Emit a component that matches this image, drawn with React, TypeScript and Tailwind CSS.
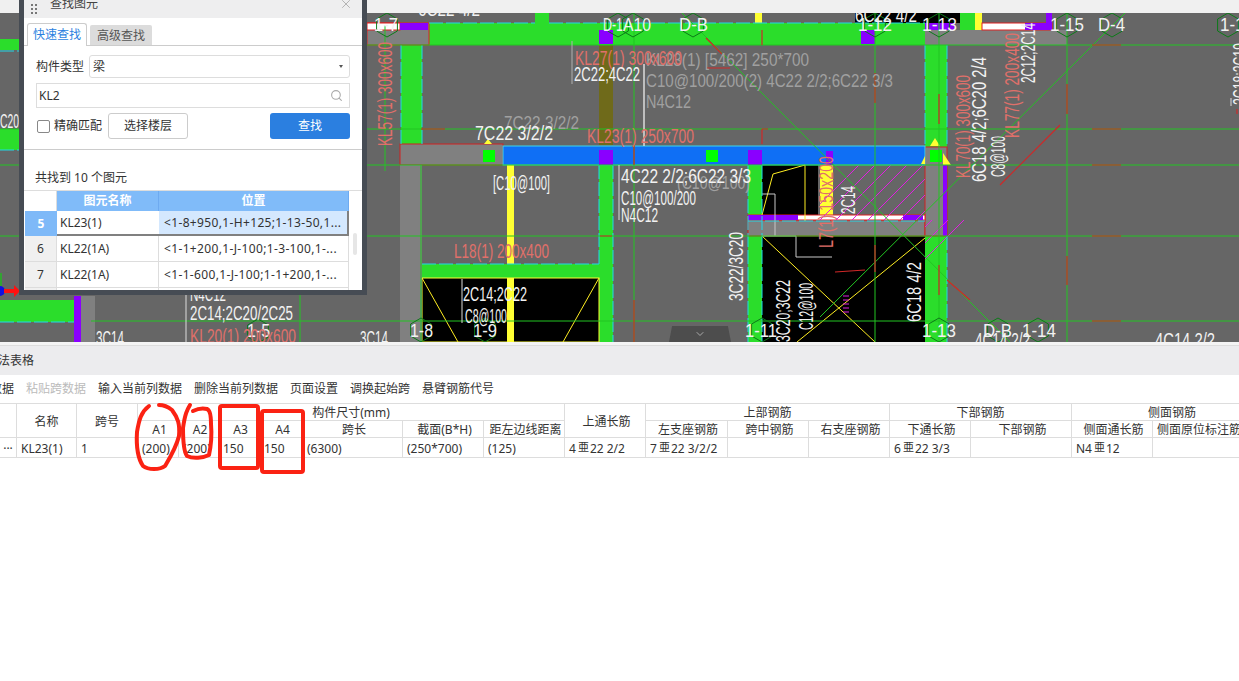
import { ChevronDown, Search, X } from "lucide-react";

const FONT = "font-['Noto_Sans','Noto_Sans_CJK_SC',sans-serif]";

type Label = { t: string; x: number; y: number; w: number; s?: number; c?: string; rot?: boolean };

// x, baseline, text length (px), size, colour. rot = read bottom to top
const WHITE = "#f2f2f2";
const GREY = "#a0a0a0";
const SALMON = "#e0706a";

const labels: Label[] = [
  { t: "1-7", x: 374, y: 31, w: 24, s: 19 },
  { t: "D-1", x: 603, y: 31, w: 20, s: 19 },
  { t: "A10", x: 623, y: 31, w: 28, s: 19 },
  { t: "D-B", x: 679, y: 31, w: 29, s: 19 },
  { t: "1-12", x: 858, y: 31, w: 34, s: 19 },
  { t: "1-13", x: 922, y: 31, w: 35, s: 19 },
  { t: "1-15", x: 1050, y: 31, w: 34, s: 19 },
  { t: "D-4", x: 1098, y: 31, w: 27, s: 19 },
  { t: "1-16", x: 1220, y: 31, w: 34, s: 19 },
  { t: "1-8", x: 410, y: 337, w: 23, s: 19 },
  { t: "1-9", x: 473, y: 337, w: 24, s: 19 },
  { t: "1-11", x: 745, y: 337, w: 32, s: 19 },
  { t: "1-13", x: 922, y: 337, w: 34, s: 19 },
  { t: "D-B", x: 983, y: 337, w: 29, s: 19 },
  { t: "1-14", x: 1022, y: 337, w: 34, s: 19 },
  { t: "1-5", x: 247, y: 337, w: 23, s: 19 },

  { t: "KL23(1) [5462] 250*700", x: 646, y: 66, w: 163, s: 18, c: GREY },
  { t: "C10@100/200(2) 4C22 2/2;6C22 3/3", x: 646, y: 87, w: 247, s: 18, c: GREY },
  { t: "N4C12", x: 646, y: 108, w: 45, s: 18, c: GREY },
  { t: "7C22 3/2/2", x: 504, y: 129, w: 75, s: 18, c: GREY },
  { t: "(C10@100)", x: 677, y: 189, w: 73, s: 18, c: GREY },

  { t: "KL27(1) 300x600", x: 575, y: 65, w: 107, s: 20, c: SALMON },
  { t: "KL23(1) 250x700", x: 587, y: 143, w: 107, s: 20, c: SALMON },
  { t: "L18(1) 200x400", x: 454, y: 258, w: 95, s: 20, c: SALMON },
  { t: "KL20(1) 200x600", x: 190, y: 343, w: 106, s: 20, c: SALMON },

  { t: "2C22;4C22", x: 574, y: 81, w: 66, s: 20 },
  { t: "7C22  3/2/2", x: 475, y: 140, w: 78, s: 20 },
  { t: "[C10@100]", x: 493, y: 190, w: 57, s: 20 },
  { t: "4C22 2/2;6C22 3/3", x: 621, y: 183, w: 130, s: 20 },
  { t: "C10@100/200", x: 621, y: 205, w: 75, s: 20 },
  { t: "N4C12", x: 621, y: 222, w: 37, s: 20 },
  { t: "2C14;2C22", x: 463, y: 301, w: 64, s: 20 },
  { t: "C8@100", x: 465, y: 323, w: 42, s: 20 },
  { t: "N4C12", x: 190, y: 301, w: 36, s: 20 },
  { t: "2C14;2C20/2C25", x: 190, y: 320, w: 103, s: 20 },
  { t: "3C14", x: 96, y: 345, w: 28, s: 20 },
  { t: "3C14", x: 360, y: 345, w: 28, s: 20 },
  { t: "4C14 2/2", x: 975, y: 347, w: 55, s: 20 },
  { t: "4C14 2/2", x: 1155, y: 347, w: 60, s: 20 },
  { t: "6C22  4/2", x: 418, y: 16, w: 62, s: 20 },
  { t: "6C22  4/2", x: 855, y: 22, w: 62, s: 20 },

  { t: "3C22/3C20", x: 743, y: 301, w: 69, s: 20, rot: true },
  { t: "3C20;3C22", x: 790, y: 342, w: 62, s: 20, rot: true },
  { t: "C12@100", x: 813, y: 330, w: 47, s: 20, rot: true },
  { t: "6C18 4/2;6C20 2/4", x: 986, y: 182, w: 125, s: 20, rot: true },
  { t: "C8@100", x: 1005, y: 177, w: 41, s: 20, rot: true },
  { t: "2C12;2C14", x: 1035, y: 83, w: 60, s: 20, rot: true },
  { t: "6C18  4/2", x: 921, y: 322, w: 60, s: 20, rot: true },
  { t: "2C14", x: 855, y: 214, w: 28, s: 20, rot: true },
  { t: "2C18;2C19", x: 1247, y: 105, w: 62, s: 20, rot: true },
  { t: "KL70(1) 300x600", x: 970, y: 178, w: 103, s: 20, c: SALMON, rot: true },
  { t: "KL77(1) 200x400", x: 1019, y: 138, w: 105, s: 20, c: SALMON, rot: true },
  { t: "KL57(1) 300x600", x: 392, y: 146, w: 104, s: 20, c: SALMON, rot: true },
  { t: "L7(1) 150x200", x: 833, y: 248, w: 92, s: 20, c: SALMON, rot: true },
];

const hexes = [
  [387, 25], [618, 25], [633, 25], [693, 25], [875, 25], [939, 25], [1067, 25], [1112, 25], [1228, 25],
  [421, 330], [485, 330], [762, 330], [939, 330], [998, 330], [1038, 330], [258, 331],
];

const hexPoints = (cx: number, cy: number, r = 12) =>
  [0, 60, 120, 180, 240, 300]
    .map((a) => `${cx + r * Math.sin((a * Math.PI) / 180)},${cy - r * Math.cos((a * Math.PI) / 180)}`)
    .join(" ");

const hatch = [0, 1, 2, 3, 4, 5, 6, 7, 8, 9, 10].map((i) => {
  const x0 = 804 + i * 16;
  const x1 = Math.max(x0, 820);
  const x2 = Math.min(x0 + 55, 925);
  return { x1, y1: 220 - (x1 - x0), x2, y2: 220 - (x2 - x0) };
});

const CadDrawing = () => (
  <svg viewBox="0 13 1239 329" className="block h-full w-full" fontFamily="'Liberation Sans',sans-serif">
    <rect x="0" y="13" width="1239" height="329" fill="#666666" />

    {/* beams + columns */}
    <rect x="0" y="39" width="19" height="11" fill="#2bdd2b" />
    <rect x="0" y="129" width="19" height="21" fill="#2bdd2b" />
    <rect x="0" y="300" width="74" height="22" fill="#2bdd2b" />
    <rect x="74" y="296" width="7" height="46" fill="#8a00ff" />
    <rect x="81" y="296" width="14" height="46" fill="#808080" />
    <rect x="429" y="23" width="496" height="22" fill="#2bdd2b" />
    <rect x="535" y="13" width="14" height="10" fill="#2bdd2b" />
    <rect x="755" y="13" width="7" height="10" fill="#ffff33" />
    <rect x="401" y="45" width="21" height="100" fill="#2bdd2b" />
    <rect x="367" y="23" width="62" height="22" fill="#808080" stroke="#e02020" />
    <rect x="367" y="23" width="33" height="7" fill="#ffffff" stroke="#e02020" />
    <rect x="400" y="23" width="28" height="7" fill="#8a00ff" />
    <rect x="599" y="45" width="14" height="100" fill="#6f6a1a" />
    <rect x="422" y="264" width="177" height="14" fill="#2bdd2b" />
    <rect x="599" y="165" width="14" height="177" fill="#2bdd2b" />
    <rect x="748" y="165" width="14" height="177" fill="#2bdd2b" />
    <rect x="925" y="45" width="22" height="102" fill="#2bdd2b" />
    <rect x="925" y="236" width="22" height="106" fill="#2bdd2b" />

    {/* black pits */}
    <rect x="422" y="278" width="177" height="64" fill="#000" stroke="#ffff33" />
    <rect x="762" y="165" width="56" height="50" fill="#000" />
    <rect x="762" y="236" width="163" height="106" fill="#000" />
    <rect x="925" y="13" width="35" height="10" fill="#000" />
    <rect x="855" y="13" width="70" height="10" fill="#000" />

    {/* grey slabs */}
    <rect x="400" y="144" width="103" height="21" fill="#808080" stroke="#d02020" />
    <rect x="400" y="165" width="22" height="177" fill="#808080" />
    <rect x="748" y="220" width="177" height="16" fill="#808080" stroke="#d02020" />
    <rect x="925" y="147" width="22" height="89" fill="#808080" stroke="#d02020" />
    <rect x="943" y="165" width="4" height="71" fill="#8a00ff" />
    <rect x="925" y="30" width="142" height="15" fill="#808080" />
    <rect x="960" y="13" width="15" height="17" fill="#2bdd2b" />
    <rect x="975" y="13" width="7" height="17" fill="#ffff33" />
    <rect x="982" y="23" width="70" height="7" fill="#ffffff" stroke="#e02020" />
    <rect x="1025" y="23" width="27" height="7" fill="#8a00ff" />
    <rect x="1046" y="13" width="6" height="12" fill="#8a00ff" />
    <rect x="925" y="23" width="30" height="7" fill="#8a00ff" />

    {/* hatched bay */}
    <rect x="820" y="165" width="13" height="50" fill="#ffff33" />
    <rect x="748" y="215" width="177" height="5" fill="#ffffff" stroke="#e02020" />
    <rect x="748" y="215" width="50" height="5" fill="#8a00ff" />
    <rect x="903" y="215" width="20" height="5" fill="#8a00ff" />
    <g stroke="#e020e0" strokeWidth="1">
      {hatch.map((h) => (
        <line key={h.x1 + h.y1} {...h} />
      ))}
    </g>

    {/* selected blue beam */}
    <rect x="503" y="146" width="422" height="19" fill="#0f6ff5" stroke="#3fd8e8" />
    <rect x="599" y="150" width="14" height="15" fill="#8a00ff" />
    <rect x="748" y="150" width="14" height="15" fill="#8a00ff" />
    <rect x="826" y="151" width="7" height="14" fill="#8a00ff" />
    <rect x="599" y="30" width="14" height="14" fill="#8a00ff" />
    <rect x="861" y="30" width="14" height="14" fill="#8a00ff" />
    <rect x="483" y="150" width="12" height="12" fill="#00ff00" />
    <rect x="706" y="150" width="12" height="12" fill="#00ff00" />
    <rect x="930" y="150" width="12" height="12" fill="#00ff00" />

    {/* yellow rebar + diagonals */}
    <rect x="507" y="165" width="7" height="99" fill="#ffff33" />
    <rect x="507" y="278" width="7" height="64" fill="#ffff33" />
    <polygon points="488,139 484,144 492,144" fill="#ffff33" />
    <polygon points="935,138 930,146 940,146" fill="#ffff33" />
    <polygon points="921,164 925,156 925,164" fill="#ffff33" />
    <polygon points="943,153 951,165 943,165" fill="#ffff33" />
    <g stroke="#ffee22" strokeWidth="1" fill="none">
      <line x1="422" y1="278" x2="458" y2="342" />
      <line x1="599" y1="278" x2="563" y2="342" />
      <polyline points="762,215 773,174 805,165 805,221" />
      <line x1="762" y1="236" x2="875" y2="342" />
      <line x1="925" y1="238" x2="797" y2="342" />
    </g>
    <path d="M762 236H796V257H832" stroke="#c8c8c8" fill="none" />
    <path d="M762 194H775V236" stroke="#c8c8c8" fill="none" />
    <path d="M843 296H849M843 300H849M843 304H849M843 308H849M843 312H849" stroke="#e020e0" />

    {/* cyan dashed edges */}
    <g stroke="#20d8e8" strokeWidth="1" strokeDasharray="14 3" fill="none">
      <path d="M401 45V145M422 45V145" />
      <path d="M429 23H535M549 23H925" />
      <path d="M599 165V264M422 264H599" />
      <path d="M613 165V342M748 165V342M762 165V342" />
      <path d="M925 45V147M947 45V147M947 236V342" />
      <path d="M748 221H925" />
      <path d="M0 51H19M0 150H19M0 322H74" />
    </g>

    {/* axis lines */}
    <g stroke="#22c522" strokeWidth="1">
      <line x1="367" y1="45" x2="1239" y2="45" />
      <line x1="0" y1="165" x2="1239" y2="165" />
      <line x1="0" y1="129" x2="1239" y2="129" />
      <line x1="0" y1="236" x2="1239" y2="236" />
      <line x1="91" y1="321" x2="1239" y2="321" />
      <line x1="421" y1="165" x2="421" y2="342" />
      <line x1="634" y1="13" x2="634" y2="342" />
      <line x1="875" y1="13" x2="875" y2="342" />
      <line x1="939" y1="13" x2="939" y2="342" />
      <line x1="1067" y1="13" x2="1067" y2="342" />
      <line x1="300" y1="295" x2="300" y2="342" />
      <line x1="682" y1="13" x2="1010" y2="342" />
      <line x1="1125" y1="13" x2="820" y2="317" />
      <line x1="385" y1="25" x2="385" y2="171" />
    </g>

    {/* red centre dashes */}
    <g stroke="#d02828" strokeWidth="1.2" fill="none">
      <path d="M421 129H445M762 129H768M600 236H612M1092 45H1121M1092 129H1121M1092 165H1121M1092 236H1121M1092 321H1121" />
      <path d="M1067 84V114M1067 256V285M1237 109V114M939 94V124M939 265V295M875 73V103M875 245V272" />
      <path d="M634 300V342M634 145V165M762 45V30M762 144V129M706 68H730" />
      <path d="M706 38L722 54M1060 125L1000 185M947 280L970 300M865 270L835 272" />
    </g>

    {/* white + red leader lines */}
    <g stroke="#dcdcdc" strokeWidth="1">
      <line x1="572" y1="41" x2="572" y2="84" stroke="#b0b0b0" />
      <line x1="644" y1="64" x2="644" y2="146" strokeWidth="1.5" />
      <line x1="619" y1="165" x2="619" y2="220" />
      <line x1="462" y1="279" x2="462" y2="323" />
      <line x1="186" y1="295" x2="186" y2="342" />
      <line x1="1231" y1="98" x2="1231" y2="106" />
    </g>

    {hexes.map(([cx, cy]) => (
      <polygon key={`${cx}-${cy}`} points={hexPoints(cx, cy)} fill="none" stroke="#0c7a18" />
    ))}

    {labels.map((l) => (
      <text
        key={`${l.t}-${l.x}-${l.y}`}
        x={l.x}
        y={l.y}
        fontSize={l.s ?? 16}
        fill={l.c ?? WHITE}
        textLength={l.w}
        lengthAdjust="spacingAndGlyphs"
        transform={l.rot ? `rotate(-90 ${l.x} ${l.y})` : undefined}
      >
        {l.t}
      </text>
    ))}

    {/* stuff left of the dialog */}
    <text x="0" y="128" fontSize="20" fill={WHITE} textLength="19" lengthAdjust="spacingAndGlyphs">C20</text>
    <circle cx="0" cy="291" r="5" fill="#1010e0" />
    <path d="M4 289H14V285L20 291L14 297V293H4Z" fill="#ff1010" />
    <path d="M1 273V286" stroke="#00e000" />
  </svg>
);

const FindDialog = () => (
  <div className="absolute left-[19px] top-[-13px] flex h-[295px] w-[348px] flex-col overflow-hidden border-x-[5px] border-b-[5px] border-[#464c54] bg-white text-[12px] text-[#333]">
    <div className="flex h-[18px] shrink-0 items-center gap-[13px] bg-[#eeeeef] pl-[7px] pr-[9px]">
      <div className="grid grid-cols-2 gap-x-[2px] gap-y-[2px]">
        {[0, 1, 2, 3, 4, 5].map((i) => (
          <span key={i} className="h-[2px] w-[2px] bg-[#777]" />
        ))}
      </div>
      <span className="flex-1 translate-y-[-5px] text-[12px] text-[#444]">查找图元</span>
      <X className="h-[14px] w-[14px] translate-y-[-5px] text-[#aaa]" strokeWidth={1.5} />
    </div>

    <div className="mt-[5px] flex h-[23px] shrink-0 items-end pl-[3px]">
      <div className="z-10 flex h-[23px] w-[60px] items-center justify-center rounded-t-[3px] border border-b-0 border-[#ccc] bg-white text-[#2b7fe0]">快速查找</div>
      <div className="ml-[3px] flex h-[21px] w-[62px] items-center justify-center rounded-t-[2px] bg-[#dcdcdc] text-[#555]">高级查找</div>
    </div>

    <div className="-mt-px h-[105px] shrink-0 border-y border-[#ccc] px-[12px] pt-[9px]">
      <div className="flex items-center">
        <span className="w-[53px]">构件类型</span>
        <div className="flex h-[23px] flex-1 items-center justify-between rounded-[3px] border border-[#ddd] pl-[3px] pr-[6px]">
          <span>梁</span>
          <span className="h-0 w-0 border-x-[2.5px] border-t-[3px] border-x-transparent border-t-[#555]" />
        </div>
      </div>
      <div className="mt-[5px] flex h-[25px] items-center justify-between border border-[#ddd] pl-[2px] pr-[6px]">
        <span>KL2</span>
        <Search className="h-[13px] w-[13px] text-[#aaa]" strokeWidth={2} />
      </div>
      <div className="mt-[5px] flex items-center">
        <span className="ml-px h-[13px] w-[13px] rounded-[2px] border border-[#888]" />
        <span className="ml-[4px]">精确匹配</span>
        <button className="ml-[6px] h-[26px] w-[80px] rounded-[3px] border border-[#ccc] text-[12px]">选择楼层</button>
        <button className="ml-auto h-[26px] w-[80px] rounded-[3px] bg-[#2b7fe0] text-[12px] text-white">查找</button>
      </div>
    </div>

    <div className="flex h-[40px] shrink-0 items-end pb-[3px] pl-[11px]">共找到 10 个图元</div>

    <div className="relative flex-1 overflow-hidden border-t border-[#ddd]">
      <div className="grid w-[325px] grid-cols-[33px_102px_190px] grid-rows-[20px_25px_26px_26px_20px] text-[12px]">
        <div className="border-r border-[#ddd]" />
        <div className="flex items-center justify-center border-r border-[#6eaaf0] bg-[#80bbf9] font-bold text-white">图元名称</div>
        <div className="flex items-center justify-center border-r border-[#6eaaf0] bg-[#80bbf9] font-bold text-white">位置</div>

        <div className="ml-px flex items-center justify-center bg-[#7eb9f8] pt-px font-bold text-white">5</div>
        <div className="flex items-center border-b-2 border-[#808080] pl-[3px] pt-px">KL23(1)</div>
        <div className="flex items-center border-r-2 border-b-2 border-[#808080] bg-[#d4e8fe] pl-[5px] pt-px tracking-[0.35px] whitespace-nowrap">&lt;1-8+950,1-H+125;1-13-50,1...</div>

        <div className="ml-px flex items-center justify-center border-r border-b border-[#ddd] bg-[#f0f0f0] pt-px">6</div>
        <div className="flex items-center border-r border-b border-[#ddd] pl-[3px] pt-px">KL22(1A)</div>
        <div className="flex items-center border-r border-b border-[#ddd] pl-[5px] pt-px tracking-[0.35px] whitespace-nowrap">&lt;1-1+200,1-J-100;1-3-100,1-...</div>

        <div className="ml-px flex items-center justify-center border-r border-b border-[#ddd] bg-[#f0f0f0] pt-px">7</div>
        <div className="flex items-center border-r border-b border-[#ddd] pl-[3px] pt-px">KL22(1A)</div>
        <div className="flex items-center border-r border-b border-[#ddd] pl-[5px] pt-px tracking-[0.35px] whitespace-nowrap">&lt;1-1-600,1-J-100;1-1+200,1-...</div>

        <div className="ml-px border-r border-[#ddd] bg-[#f0f0f0]" />
        <div className="border-r border-[#ddd]" />
        <div className="border-r border-[#ddd]" />
      </div>
      <span className="absolute left-[329px] top-[42px] h-[22px] w-[4px] rounded-full bg-[#e6e6e6]" />
    </div>
  </div>
);

const cell = "flex items-center justify-center border-r border-b border-[#ddd] pt-[2px] whitespace-nowrap overflow-hidden";
const sub = "flex items-center justify-center border-r border-b border-[#ddd] pl-[3px] pt-[2px] whitespace-nowrap overflow-hidden";
const val = "flex items-center pl-[4px] pt-[2px] border-r border-b border-[#ddd] whitespace-nowrap overflow-hidden";

const Rebar = () => <span className="ml-[2px] mr-px inline-block translate-y-[-2px] font-['Noto_Sans_CJK_JP'] text-[11px]">亜</span>;

const RebarTable = () => (
  <div className="relative h-[55px] overflow-hidden border-t border-[#ddd]">
    <div className="grid w-max grid-cols-[17px_60px_61px_41px_40px_41px_43px_100px_81px_81px_81px_82px_81px_81px_81px_101px_81px_120px] grid-rows-[17px_17px_20px]">
      <div className={`${cell} row-span-2`} />
      <div className={`${cell} row-span-2`}>名称</div>
      <div className={`${cell} row-span-2`}>跨号</div>
      <div className={`${cell} col-span-7`}>构件尺寸(mm)</div>
      <div className={`${sub} row-span-2`}>上通长筋</div>
      <div className={`${cell} col-span-3`}>上部钢筋</div>
      <div className={`${cell} col-span-2`}>下部钢筋</div>
      <div className={`${cell} col-span-2`}>侧面钢筋</div>

      <div className={sub}>A1</div>
      <div className={sub}>A2</div>
      <div className={sub}>A3</div>
      <div className={sub}>A4</div>
      <div className={sub}>跨长</div>
      <div className={sub}>截面(B*H)</div>
      <div className={sub}>距左边线距离</div>
      <div className={sub}>左支座钢筋</div>
      <div className={sub}>跨中钢筋</div>
      <div className={sub}>右支座钢筋</div>
      <div className={sub}>下通长筋</div>
      <div className={sub}>下部钢筋</div>
      <div className={sub}>侧面通长筋</div>
      <div className="flex items-center overflow-hidden border-b border-[#ddd] pl-[4px] pt-[2px] whitespace-nowrap">侧面原位标注筋</div>

      <div className={`${cell} items-end pb-[3px]`}>...</div>
      <div className={val}>KL23(1)</div>
      <div className={val}>1</div>
      <div className={val}>(200)</div>
      <div className={val}>(200)</div>
      <div className={val}>150</div>
      <div className={val}>150</div>
      <div className={val}>(6300)</div>
      <div className={val}>(250*700)</div>
      <div className={val}>(125)</div>
      <div className={val}>4<Rebar />22 2/2</div>
      <div className={val}>7<Rebar />22 3/2/2</div>
      <div className={val} />
      <div className={val} />
      <div className={val}>6<Rebar />22 3/3</div>
      <div className={val} />
      <div className={val}>N4<Rebar />12</div>
      <div className="border-b border-[#ddd]" />
    </div>
  </div>
);

// hand drawn red marks sitting on the table
const RedMarks = () => (
  <svg className="pointer-events-none absolute left-0 top-[400px] h-[80px] w-[320px]" viewBox="0 400 320 80" fill="none" stroke="#fb2213" strokeWidth="4" strokeLinejoin="round" strokeLinecap="round">
    <path d="M149 406C141 412 139 420 137 432C136 448 139 460 143 466C148 470 160 470 165 466C171 456 176 448 179 436C180 424 178 418 172 410C167 406 162 405 159 405" />
    <path d="M190 405C187 410 185 414 183 428C183 440 184 452 187 456C193 459 203 458 209 455C211 446 212 436 211 424C211 415 210 410 207 409C203 408 197 409 193 411" />
    <rect x="220" y="406" width="38" height="62" rx="2" />
    <rect x="262" y="411" width="41" height="61" rx="2" />
  </svg>
);

const App = () => (
  <div className={`relative flex h-[681px] w-[1239px] flex-col overflow-hidden bg-white text-[12px] text-[#333] ${FONT}`}>
    <div className="h-[13px] shrink-0 bg-[#f0f0f0]" />
    <div className="relative h-[329px] shrink-0">
      <CadDrawing />
      <FindDialog />
      <div className="absolute bottom-0 left-[669px] flex h-[16px] w-[62px] items-center justify-center bg-[#4d4d4d] [clip-path:polygon(5%_0,95%_0,100%_100%,0_100%)]">
        <ChevronDown className="h-[12px] w-[12px] text-[#aaa]" />
      </div>
    </div>
    <div className="h-[4px] shrink-0 border-b border-[#ddd] bg-[#f4f4f4]" />
    <div className="flex h-[29px] shrink-0 items-center bg-[#ececee]">
      <span className="-ml-[14px]">平法表格</span>
    </div>
    <div className="flex h-[28px] shrink-0 items-center gap-[12px]">
      <span className="-ml-[46px]">复制跨数据</span>
      <span className="text-[#bbb]">粘贴跨数据</span>
      <span>输入当前列数据</span>
      <span>删除当前列数据</span>
      <span>页面设置</span>
      <span>调换起始跨</span>
      <span>悬臂钢筋代号</span>
    </div>
    <RebarTable />
    <RedMarks />
  </div>
);

export default App;
